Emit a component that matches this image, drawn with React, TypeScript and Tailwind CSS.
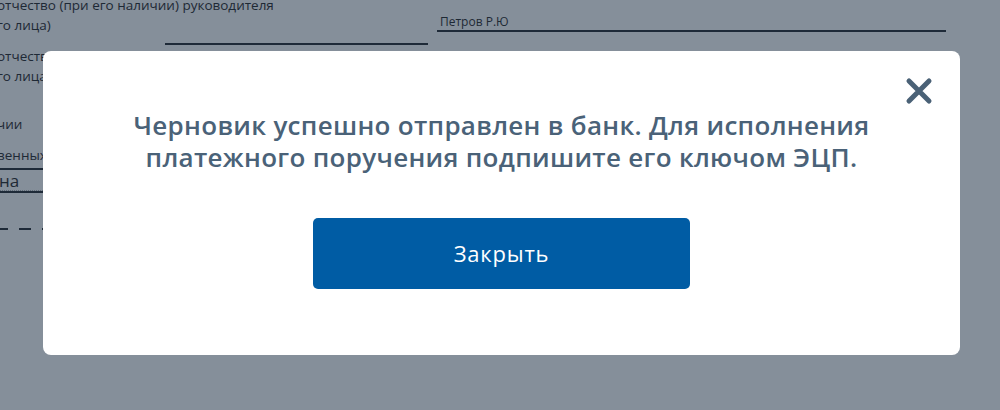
export default function App() {
  return (
    <div
      className="relative w-[1000px] h-[410px] overflow-hidden bg-[#858f9a] text-[#1e2935]"
      style={{ fontFamily: '"Open Sans", "Noto Sans", sans-serif' }}
    >
      {/* Form behind the overlay */}
      <div className="flex flex-col">
        <div className="flex">
          <div className="w-[430px] flex flex-col text-[13.5px] leading-[20px]">
            <div className="-mt-[5px] whitespace-nowrap -ml-[3px]">отчество (при его наличии) руководителя</div>
            <div className="-ml-[3px] whitespace-nowrap">го лица)</div>
            <div className="ml-[165px] w-[263px] h-[2px] bg-[#1e2a38] mt-[8px]" />
          </div>
          <div className="ml-[7px] w-[509px] pt-[14px]">
            <div className="text-[12px] leading-[16px] pl-[3px]">Петров Р.Ю</div>
            <div className="h-[2px] bg-[#1e2a38]" />
          </div>
        </div>
        <div className="flex flex-col text-[13.5px] leading-[20px] -ml-[3px] mt-[1px]">
          <div className="whitespace-nowrap">отчество</div>
          <div className="whitespace-nowrap">го лица)</div>
          <div className="whitespace-nowrap mt-[28px]">чии</div>
          <div className="whitespace-nowrap mt-[11px]">венных</div>
        </div>
        <div className="w-[45px] h-[2px] bg-[#1e2a38] mt-[3px]" />
        <div className="text-[17px] leading-[19px] -ml-[1px] mt-[1px]">на</div>
        <div className="w-[45px] border-t border-dotted border-[#5f6a76]" />
        <div className="w-[45px] h-[2px] bg-[#1e2a38]" />
        <div className="flex gap-[11px] mt-[35px] -ml-[4px]">
          <div className="w-[12px] h-[2px] bg-[#1e2a38]" />
          <div className="w-[12px] h-[2px] bg-[#1e2a38]" />
          <div className="w-[12px] h-[2px] bg-[#1e2a38]" />
        </div>
      </div>

      {/* Modal */}
      <div className="absolute left-[43px] top-[51px] w-[917px] h-[304px] bg-white rounded-[8px] flex flex-col items-center">
        <button className="absolute right-[27px] top-[26px] w-[28px] h-[28px] flex items-center justify-center">
          <svg width="28" height="28" viewBox="0 0 28 28" fill="none">
            <path d="M4 4L24 24M24 4L4 24" stroke="#4a6176" strokeWidth="5" strokeLinecap="round" />
          </svg>
        </button>
        <div className="mt-[58px] text-center text-[26px] leading-[32px] tracking-[0.3px] font-semibold text-[#4a6278]">
          Черновик успешно отправлен в банк. Для исполнения
          <br />
          платежного поручения подпишите его ключом ЭЦП.
        </div>
        <button className="mt-[45px] w-[377px] h-[71px] rounded-[5px] bg-[#005ca4] text-white text-[22px] tracking-[0.8px] flex items-center justify-center">
          Закрыть
        </button>
      </div>
    </div>
  );
}
